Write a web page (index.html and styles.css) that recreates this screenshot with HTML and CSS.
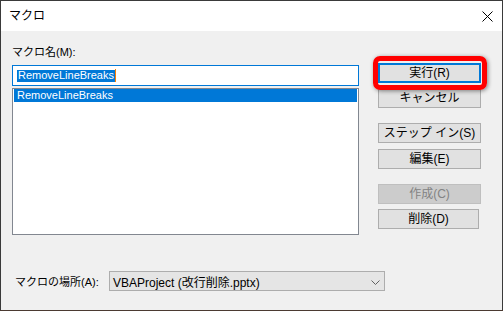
FILE: index.html
```html
<!DOCTYPE html>
<html lang="ja">

<head>
    <meta charset="UTF-8">
    <title>マクロ</title>
    <link rel="stylesheet" href="styles.css">
</head>

<body>
    <div class="window">
        <div class="titlebar">
            <span>マクロ</span>
            <svg class="close" width="11" height="11" viewBox="0 0 11 11">
                <path d="M0.5 0.5 L10.5 10.5 M10.5 0.5 L0.5 10.5" stroke="#000" stroke-width="1" fill="none" />
            </svg>
        </div>

        <div class="content">
            <div class="main">
                <div class="names">
                    <label>マクロ名(M):</label>
                    <div class="name-input"><span class="selected-text">RemoveLineBreaks</span><span class="caret"></span></div>
                    <ul class="list">
                        <li class="active">RemoveLineBreaks</li>
                    </ul>
                </div>

                <div class="buttons">
                    <button class="default">実行(R)</button>
                    <button>キャンセル</button>
                    <button class="group">ステップ イン(S)</button>
                    <button class="near">編集(E)</button>
                    <button class="group" disabled>作成(C)</button>
                    <button class="narrow">削除(D)</button>
                    <div class="highlight"></div>
                </div>
            </div>

            <div class="location">
                <label>マクロの場所(A):</label>
                <div class="select">
                    <span>VBAProject (改行削除.pptx)</span>
                    <svg width="9" height="5" viewBox="0 0 9 5">
                        <path d="M0.5 0.5 L4.5 4.5 L8.5 0.5" stroke="#606060" stroke-width="1" fill="none" />
                    </svg>
                </div>
            </div>
        </div>
    </div>
</body>

</html>
```

FILE: styles.css
```css
body {
    margin: 0;
    background: #4b3a32;
    font-family: "Liberation Sans", "Noto Sans CJK JP", sans-serif;
    font-size: 11px;
    color: #000;
}

.window {
    width: 501px;
    height: 309px;
    border: 1px solid #3a3a3a;
    border-bottom: 0;
    background: #f0f0f0;
    display: flex;
    flex-direction: column;
}

.titlebar {
    height: 30px;
    background: #fff;
    display: flex;
    align-items: center;
    justify-content: space-between;
    padding: 0 9px 0 8px;
    font-size: 12px;

    span {
        line-height: 14px;
    }

    .close {
        margin-top: 1px;
    }
}

.content {
    flex-grow: 1;
    padding: 0 0 0 11px;
}

.main {
    display: flex;
}

.names {
    width: 347px;
    display: flex;
    flex-direction: column;

    label {
        line-height: 16px;
        margin-top: 13px;
        height: 21px;
    }
}

.name-input {
    height: 19px;
    border: 1px solid #0078d7;
    background: #fff;
    display: flex;
    align-items: center;
    padding-left: 4px;

    .selected-text {
        background: #0078d7;
        color: #fff;
        line-height: 13px;
        height: 12px;
        padding: 0 1px;
        display: flex;
        align-items: center;
    }

    .caret {
        width: 1px;
        height: 13px;
        background: #ff8000;
    }
}

.list {
    list-style: none;
    margin: 2px 0 0;
    padding: 0 1px;
    height: 145px;
    border: 1px solid #828790;
    background: #fff;

    li {
        line-height: 13px;
        padding-left: 3px;
    }

    .active {
        background: #0078d7;
        color: #fff;
    }
}

.buttons {
    position: relative;
    display: flex;
    flex-direction: column;
    margin: 32px 0 0 19px;

    button {
        width: 103px;
        height: 20px;
        margin: 5px 0 0;
        padding: 0;
        border: 1px solid #adadad;
        background: #e1e1e1;
        font: inherit;
        font-size: 12px;
        line-height: 14px;
        color: #000;

        &:first-child {
            margin-top: 0;
        }

        &.default {
            border: 2px solid #0078d7;
        }

        &.group {
            margin-top: 15px;
        }

        &.near {
            margin-top: 6px;
        }

        &.narrow {
            width: 101px;
        }

        &:disabled {
            background: #cccccc;
            border-color: #bfbfbf;
            color: #838383;
        }
    }
}

.highlight {
    position: absolute;
    left: -5px;
    top: -7px;
    width: 104px;
    height: 24px;
    border: 5px solid #ff0000;
    border-radius: 7px;
    box-shadow: 1px 1px 4px rgba(0, 0, 0, 0.45);
}

.location {
    display: flex;
    align-items: center;
    margin-top: 36px;

    label {
        width: 94px;
        padding-left: 3px;
    }
}

.select {
    width: 267px;
    height: 18px;
    border: 1px solid #adadad;
    background: #e5e5e5;
    display: flex;
    align-items: center;
    justify-content: space-between;
    padding: 0 4px 0 3px;
    font-size: 12px;

    svg {
        margin-top: 2px;
    }
}
```
